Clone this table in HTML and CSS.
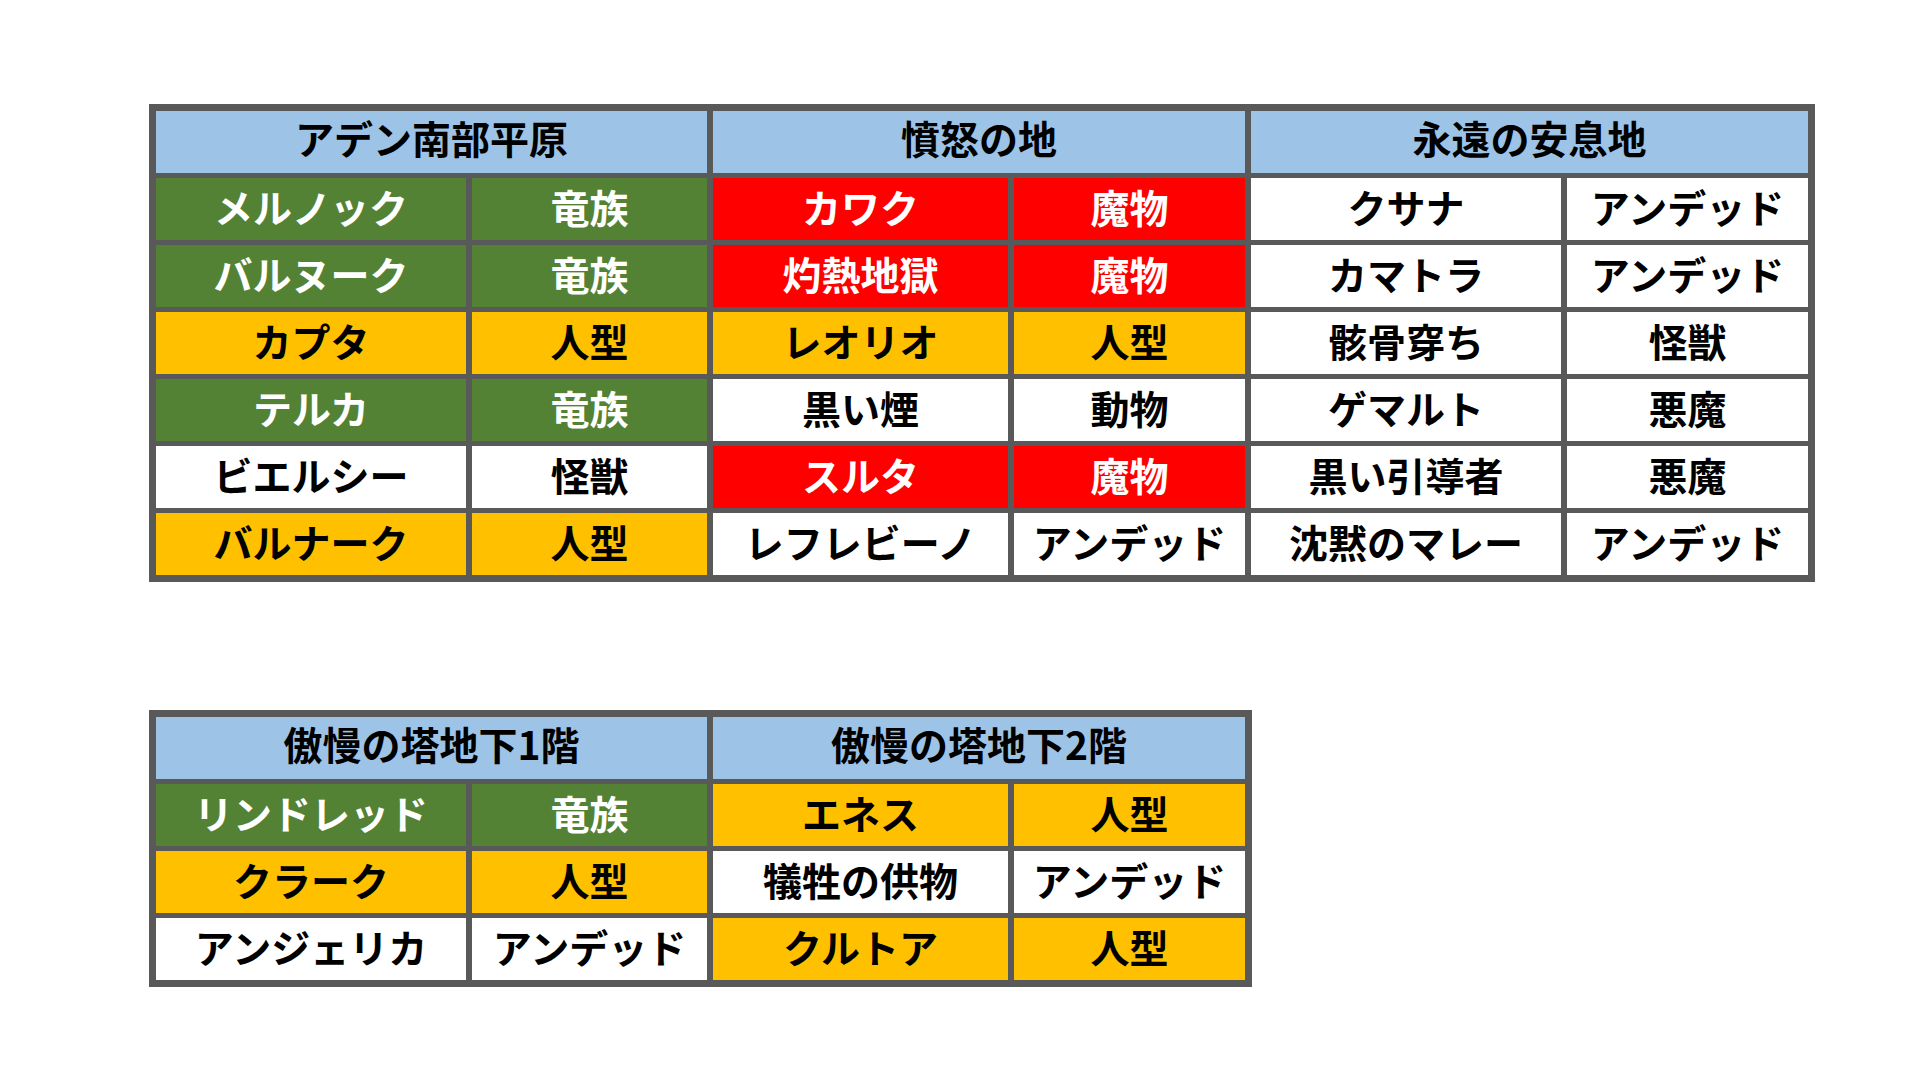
FILE: index.html
```html
<!DOCTYPE html>
<html lang="ja">
<head>
<meta charset="utf-8">
<link rel="stylesheet" href="styles.css">
</head>
<body>
<div class="page">
  <div class="grid grid-6">
    <div class="cell head span2">アデン南部平原</div>
    <div class="cell head span2">憤怒の地</div>
    <div class="cell head span2">永遠の安息地</div>

    <div class="cell green">メルノック</div>
    <div class="cell green">竜族</div>
    <div class="cell red">カワク</div>
    <div class="cell red">魔物</div>
    <div class="cell white">クサナ</div>
    <div class="cell white">アンデッド</div>

    <div class="cell green">バルヌーク</div>
    <div class="cell green">竜族</div>
    <div class="cell red">灼熱地獄</div>
    <div class="cell red">魔物</div>
    <div class="cell white">カマトラ</div>
    <div class="cell white">アンデッド</div>

    <div class="cell yellow">カプタ</div>
    <div class="cell yellow">人型</div>
    <div class="cell yellow">レオリオ</div>
    <div class="cell yellow">人型</div>
    <div class="cell white">骸骨穿ち</div>
    <div class="cell white">怪獣</div>

    <div class="cell green">テルカ</div>
    <div class="cell green">竜族</div>
    <div class="cell white">黒い煙</div>
    <div class="cell white">動物</div>
    <div class="cell white">ゲマルト</div>
    <div class="cell white">悪魔</div>

    <div class="cell white">ビエルシー</div>
    <div class="cell white">怪獣</div>
    <div class="cell red">スルタ</div>
    <div class="cell red">魔物</div>
    <div class="cell white">黒い引導者</div>
    <div class="cell white">悪魔</div>

    <div class="cell yellow">バルナーク</div>
    <div class="cell yellow">人型</div>
    <div class="cell white">レフレビーノ</div>
    <div class="cell white">アンデッド</div>
    <div class="cell white">沈黙のマレー</div>
    <div class="cell white">アンデッド</div>
  </div>

  <div class="grid grid-4">
    <div class="cell head span2">傲慢の塔地下1階</div>
    <div class="cell head span2">傲慢の塔地下2階</div>

    <div class="cell green">リンドレッド</div>
    <div class="cell green">竜族</div>
    <div class="cell yellow">エネス</div>
    <div class="cell yellow">人型</div>

    <div class="cell yellow">クラーク</div>
    <div class="cell yellow">人型</div>
    <div class="cell white">犠牲の供物</div>
    <div class="cell white">アンデッド</div>

    <div class="cell white">アンジェリカ</div>
    <div class="cell white">アンデッド</div>
    <div class="cell yellow">クルトア</div>
    <div class="cell yellow">人型</div>
  </div>
</div>
</body>
</html>
```

FILE: styles.css
```css
html, body {
  margin: 0;
  padding: 0;
  background: #ffffff;
}

.page {
  padding: 104px 0 0 149px;
  display: flex;
  flex-direction: column;
  align-items: flex-start;
  gap: 128px;
  font-family: "Noto Sans CJK JP", "Noto Sans", sans-serif;
  font-weight: 700;
}

.grid {
  display: grid;
  background: #595959;
  padding: 7px;
  column-gap: 6px;
  row-gap: 5px;
  grid-auto-rows: 62px;
}

.grid-6 {
  grid-template-columns: 310px 235px 295px 231px 310px 241px;
}

.grid-4 {
  grid-template-columns: 310px 235px 295px 231px;
}

.cell {
  display: flex;
  align-items: center;
  justify-content: center;
  box-sizing: border-box;
  padding-bottom: 6px;
  font-size: 39px;
  line-height: 1;
  color: #000000;
  white-space: nowrap;
}

.span2 {
  grid-column: span 2;
}

.head {
  background: #9dc3e6;
  padding-bottom: 9px;
}

.green {
  background: #548235;
  color: #ffffff;
}

.red {
  background: #ff0000;
  color: #ffffff;
}

.yellow {
  background: #ffc000;
}

.white {
  background: #ffffff;
}
```
